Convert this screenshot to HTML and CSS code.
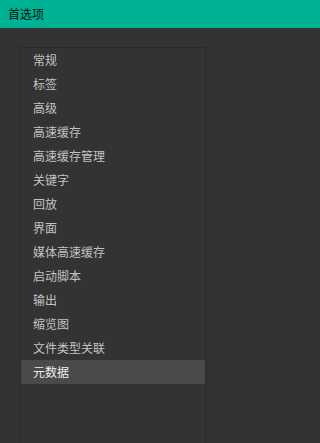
FILE: index.html
```html
<!DOCTYPE html>
<html lang="zh-CN">
<head>
<meta charset="utf-8">
<link rel="stylesheet" href="styles.css">
</head>
<body>
<div class="app">
  <header class="titlebar">首选项</header>
  <main class="content">
    <ul class="nav">
      <li class="item">常规</li>
      <li class="item">标签</li>
      <li class="item">高级</li>
      <li class="item">高速缓存</li>
      <li class="item">高速缓存管理</li>
      <li class="item">关键字</li>
      <li class="item">回放</li>
      <li class="item">界面</li>
      <li class="item">媒体高速缓存</li>
      <li class="item">启动脚本</li>
      <li class="item">输出</li>
      <li class="item">缩览图</li>
      <li class="item">文件类型关联</li>
      <li class="item selected">元数据</li>
    </ul>
  </main>
</div>
</body>
</html>
```
FILE: styles.css
```css
html, body {
  margin: 0;
  padding: 0;
  height: 100%;
  background: #333333;
  overflow: hidden;
}
.app {
  display: flex;
  flex-direction: column;
  height: 100%;
  font-family: "Noto Sans CJK SC", "Noto Sans", sans-serif;
  font-size: 12px;
}
.titlebar {
  height: 28px;
  line-height: 28px;
  padding-left: 8px;
  background: #00b294;
  color: #111111;
  flex: none;
}
.content {
  flex: 1;
  display: flex;
  width: 225px;
  box-sizing: border-box;
  padding: 19px 19px 0 20px;
  min-height: 0;
}
.nav {
  list-style: none;
  margin: 0 0 -20px 0;
  padding: 0;
  flex: 1;
  border: 1px solid #2a2a2a;
}
.item {
  height: 24px;
  line-height: 24px;
  padding-left: 12px;
  color: #c3c3c3;
}
.item.selected {
  background: #4a4a4a;
  color: #f0f0f0;
}
```
